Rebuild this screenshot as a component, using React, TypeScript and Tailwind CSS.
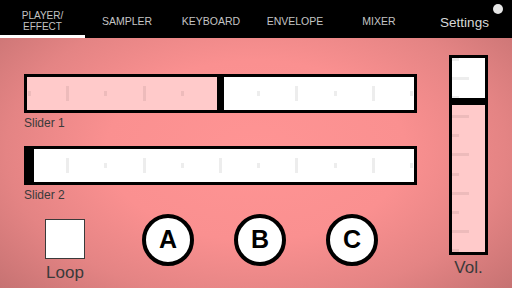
import React from 'react';

const tabs = ['SAMPLER', 'KEYBOARD', 'ENVELOPE', 'MIXER'];

// alternating short / long tick marks, 11 per slider
const ticks = Array.from({ length: 11 }, (_, i) => i % 2 === 1);

function HSlider({ value, label }: { value: number; label: string }) {
  return (
    <div>
      <div className="relative h-[39px] border-[3px] border-black bg-white">
        <div className="absolute left-0 top-0 bottom-0 bg-[#ffcaca]" style={{ width: value }} />
        <div className="absolute inset-0 flex items-center justify-between px-[1px]">
          {ticks.map((long, i) => (
            <div key={i} className={`w-[3px] bg-black/[0.07] ${long ? 'h-[15px]' : 'h-[5px]'}`} />
          ))}
        </div>
        <div className="absolute top-0 bottom-0 w-[7px] bg-black" style={{ left: value }} />
      </div>
      <div className="h-[33px] pt-[3px] text-[12px] leading-[14px] text-[#3a3a3a]">{label}</div>
    </div>
  );
}

function VSlider({ value }: { value: number }) {
  return (
    <div className="flex flex-col items-center">
      <div className="relative h-[200px] w-[39px] border-[3px] border-black bg-white">
        <div className="absolute left-0 right-0 bottom-0 bg-[#ffcaca]" style={{ height: value }} />
        <div className="absolute inset-0 flex flex-col justify-between">
          {ticks.map((long, i) => (
            <div key={i} className={`h-[3px] bg-black/[0.07] ${long ? 'w-[17px]' : 'w-[7px]'}`} />
          ))}
        </div>
        <div className="absolute left-0 right-0 h-[7px] bg-black" style={{ bottom: value }} />
      </div>
      <div className="mt-[3px] text-[17px] leading-[20px] text-[#3a3a3a]">Vol.</div>
    </div>
  );
}

function Pad({ letter }: { letter: string }) {
  return (
    <div className="flex h-[52px] w-[52px] items-center justify-center rounded-full border-[4px] border-black bg-white text-[25px] font-bold text-black">
      {letter}
    </div>
  );
}

export default function App() {
  return (
    <div
      className="flex h-[288px] w-[512px] flex-col overflow-hidden"
      style={{ fontFamily: '"Liberation Sans", Arial, sans-serif' }}
    >
      <div className="relative flex h-[38px] shrink-0 bg-black text-[#c4c4c4]">
        <div className="flex w-[85px] flex-col items-center justify-center border-b-[3px] border-white pt-[7px] text-[10px] leading-[11px]">
          <span>PLAYER/</span>
          <span>EFFECT</span>
        </div>
        {tabs.map((t) => (
          <div key={t} className="flex w-[84px] items-center justify-center pt-[6px] text-[10.5px]">
            {t}
          </div>
        ))}
        <div className="flex flex-1 items-center justify-center pt-[8px] pr-[4px] text-[13.5px] text-[#d8d8d8]">
          Settings
        </div>
        <div className="absolute right-[9px] top-[4px] h-[10px] w-[10px] rounded-full bg-[#e6e6e6]" />
      </div>

      <div className="flex flex-1 items-start bg-[radial-gradient(ellipse_65%_80%_at_50%_45%,#ff9494_0%,#fa9090_45%,#e48484_75%,#bf6e6e_110%)] pl-[24px]">
        <div className="flex w-[393px] flex-col pt-[36px]">
          <HSlider value={190} label="Slider 1" />
          <HSlider value={0} label="Slider 2" />
          <div className="mt-[-4px] flex items-start">
            <div className="ml-[21px] mt-[5px] flex flex-col items-center">
              <div className="h-[40px] w-[40px] border border-[#3a3a3a] bg-white" />
              <div className="mt-[4px] text-[17px] leading-[20px] text-[#3a3a3a]">Loop</div>
            </div>
            <div className="ml-[57px] flex gap-[40px]">
              <Pad letter="A" />
              <Pad letter="B" />
              <Pad letter="C" />
            </div>
          </div>
        </div>
        <div className="ml-[32px] mt-[17px]">
          <VSlider value={147} />
        </div>
      </div>
    </div>
  );
}
